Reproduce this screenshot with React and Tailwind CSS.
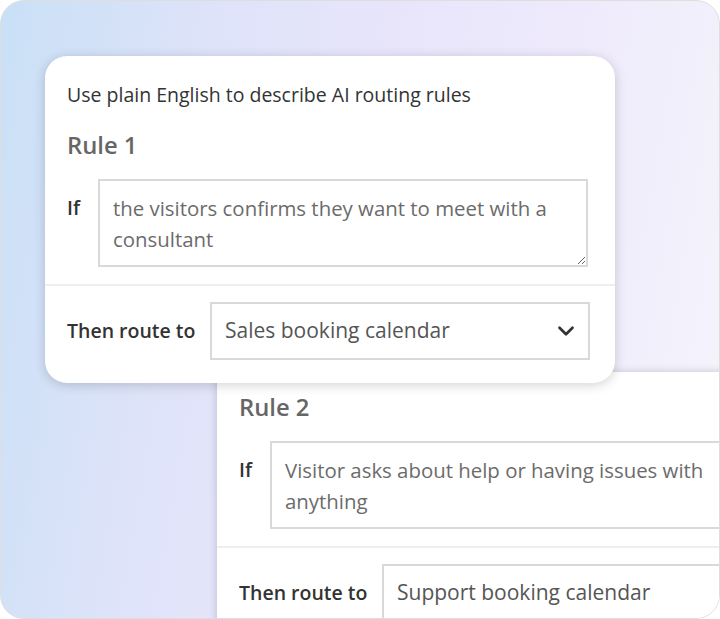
import React from 'react';
import { ChevronDown } from 'lucide-react';

function RuleBody({ title, condition, target, showGrip, showChevron }) {
  return (
    <>
      <div className="px-[22px]">
        <h2 className="text-[23.8px] leading-[30px] font-semibold text-[#666]">{title}</h2>
        <div className="mt-[19px] flex items-start">
          <span className="w-[31px] shrink-0 pt-[13px] text-[19.5px] leading-[31px] font-semibold text-[#333]">If</span>
          <textarea
            readOnly
            defaultValue={condition}
            className={`h-[88px] w-[490px] shrink-0 border-2 border-[#d9d9d9] bg-white px-[13px] pt-[12px] text-[20.4px] leading-[31px] text-[#6b6b6b] outline-none ${showGrip ? '' : 'resize-none'}`}
            style={{ fontFamily: '"Open Sans", sans-serif' }}
          />
        </div>
      </div>
      <div className="mt-[17px] border-t-2 border-[#eeeeee]" />
      <div className="mt-[16px] flex items-center px-[22px]">
        <span className="w-[143px] shrink-0 text-[19.5px] font-semibold text-[#333]">Then route to</span>
        <div className="flex h-[58px] w-[380px] shrink-0 items-center justify-between border-2 border-[#d9d9d9] bg-white pl-[13px] pr-[9px]">
          <span className="text-[21px] text-[#555]">{target}</span>
          {showChevron && <ChevronDown size={26} strokeWidth={2.5} className="text-[#333]" />}
        </div>
      </div>
    </>
  );
}

export default function App() {
  return (
    <div className="bg-white" style={{ fontFamily: '"Open Sans", sans-serif' }}>
      <div className="h-[619px] w-[720px] overflow-hidden rounded-[24px] border border-[#dedede] bg-[linear-gradient(100deg,#c9e0f6_0%,#dde3f9_25%,#e9e5fb_50%,#efebfc_72%,#f5f4fb_100%)]">
        <div className="relative z-10 ml-[44px] mt-[55px] w-[570px] rounded-[22px] bg-white pb-[23px] pt-[24px] shadow-[0_2px_12px_rgba(0,0,0,0.18)]">
          <p className="mb-[21px] px-[22px] text-[19.5px] leading-[29px] text-[#333]">
            Use plain English to describe AI routing rules
          </p>
          <RuleBody
            title="Rule 1"
            condition="the visitors confirms they want to meet with a consultant"
            target="Sales booking calendar"
            showGrip
            showChevron
          />
        </div>
        <div className="-mt-[11px] ml-[216px] w-[570px] rounded-tl-[5px] bg-white pb-[23px] pt-[20px] shadow-[0_0_8px_rgba(0,0,0,0.18)]">
          <RuleBody
            title="Rule 2"
            condition="Visitor asks about help or having issues with anything"
            target="Support booking calendar"
          />
        </div>
      </div>
    </div>
  );
}
